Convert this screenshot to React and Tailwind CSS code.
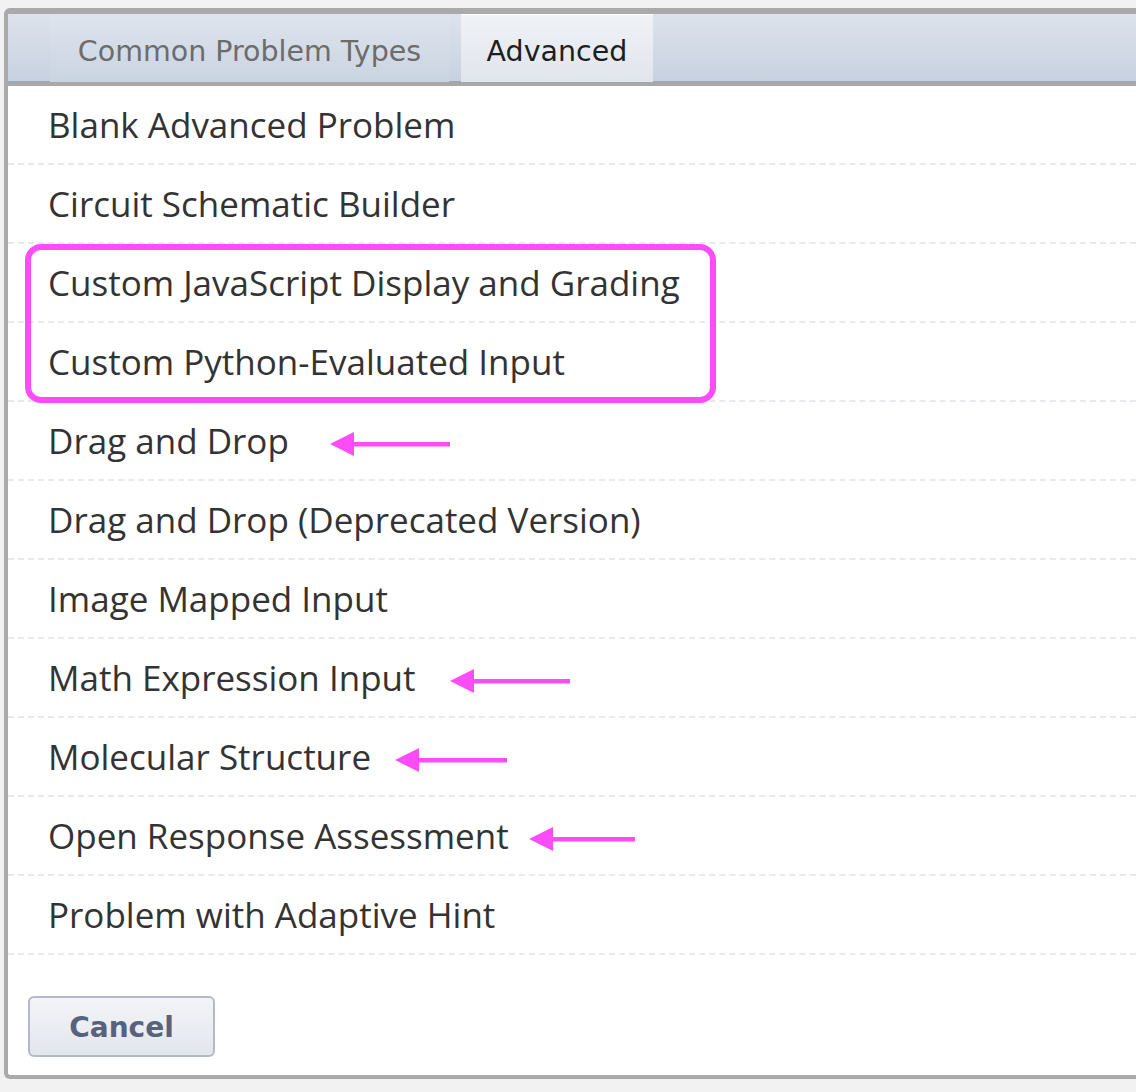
import React from "react";

const items = [
  "Blank Advanced Problem",
  "Circuit Schematic Builder",
  "Custom JavaScript Display and Grading",
  "Custom Python-Evaluated Input",
  "Drag and Drop",
  "Drag and Drop (Deprecated Version)",
  "Image Mapped Input",
  "Math Expression Input",
  "Molecular Structure",
  "Open Response Assessment",
  "Problem with Adaptive Hint",
];

const arrows = {
  "Drag and Drop": { cls: "left-[322px] w-[120px]", w: 120 },
  "Math Expression Input": { cls: "left-[442px] w-[120px]", w: 120 },
  "Molecular Structure": { cls: "left-[387px] w-[112px]", w: 112 },
  "Open Response Assessment": { cls: "left-[521px] w-[106px]", w: 106 },
};

function Arrow({ cls, w }) {
  return (
    <svg
      className={`absolute top-1/2 -translate-y-1/2 mt-[3px] h-[26px] ${cls}`}
      viewBox={`0 0 ${w} 26`}
      fill="none"
    >
      <polygon points="0,13 24,1 24,25" fill="#fc4cf7" />
      <rect x="22" y="11" width={w - 22} height="4.5" fill="#fc4cf7" />
    </svg>
  );
}

export default function App() {
  return (
    <div className="min-h-[1092px] w-full overflow-hidden bg-[#f2f2f2] pt-[8px] pl-[4px]">
      <div className="h-[1071px] bg-white border-l-[4px] border-t-[6px] border-b-[4px] border-[#aaaaaa] rounded-tl-[6px] rounded-bl-[6px] flex flex-col">
        {/* Tab bar */}
        <div className="h-[72px] shrink-0 flex items-stretch pl-[42px] gap-[12px] bg-gradient-to-b from-[#dde3ec] to-[#c7d1df] border-b-[4px] border-[#a8a8a8] shadow-[inset_0_-1px_0_#9ca8ba]">
          <div
            className="w-[399px] flex items-center justify-center pt-[8px] text-[28.5px] text-[#6c6c6c] bg-gradient-to-b from-[#dfe5ee] to-[#cad3e1]"
            style={{ fontFamily: '"DejaVu Sans", Verdana, sans-serif' }}
          >
            Common Problem Types
          </div>
          <div
            className="w-[192px] flex items-center justify-center pt-[8px] text-[28.5px] text-[#1e1e1e] bg-gradient-to-b from-[#eff2f7] to-[#e1e5ec] border-t border-white"
            style={{ fontFamily: '"DejaVu Sans", Verdana, sans-serif' }}
          >
            Advanced
          </div>
        </div>

        {/* List */}
        <div className="relative" style={{ fontFamily: '"Open Sans", "Noto Sans", sans-serif' }}>
          {items.map((t) => (
            <div
              key={t}
              className="relative h-[79px] flex items-center pl-[40px] pt-[2px] border-b-2 border-dashed border-[#e7ebf0] text-[35px] text-[#333333]"
            >
              <span>{t}</span>
              {arrows[t] && <Arrow {...arrows[t]} />}
            </div>
          ))}
          <div className="absolute left-[17px] top-[158px] w-[691px] h-[159px] border-[6px] border-[#fc4cf7] rounded-[16px] pointer-events-none" />
        </div>

        {/* Footer */}
        <div className="pl-[20px] pt-[41px]">
          <button
            className="w-[187px] h-[61px] pt-[3px] rounded-[6px] border-2 border-[#b3b9c5] bg-gradient-to-b from-[#f3f4f7] to-[#e2e6ed] text-[28px] font-bold text-[#58627a]"
            style={{ fontFamily: '"DejaVu Sans", Verdana, sans-serif' }}
          >
            Cancel
          </button>
        </div>
      </div>
    </div>
  );
}
